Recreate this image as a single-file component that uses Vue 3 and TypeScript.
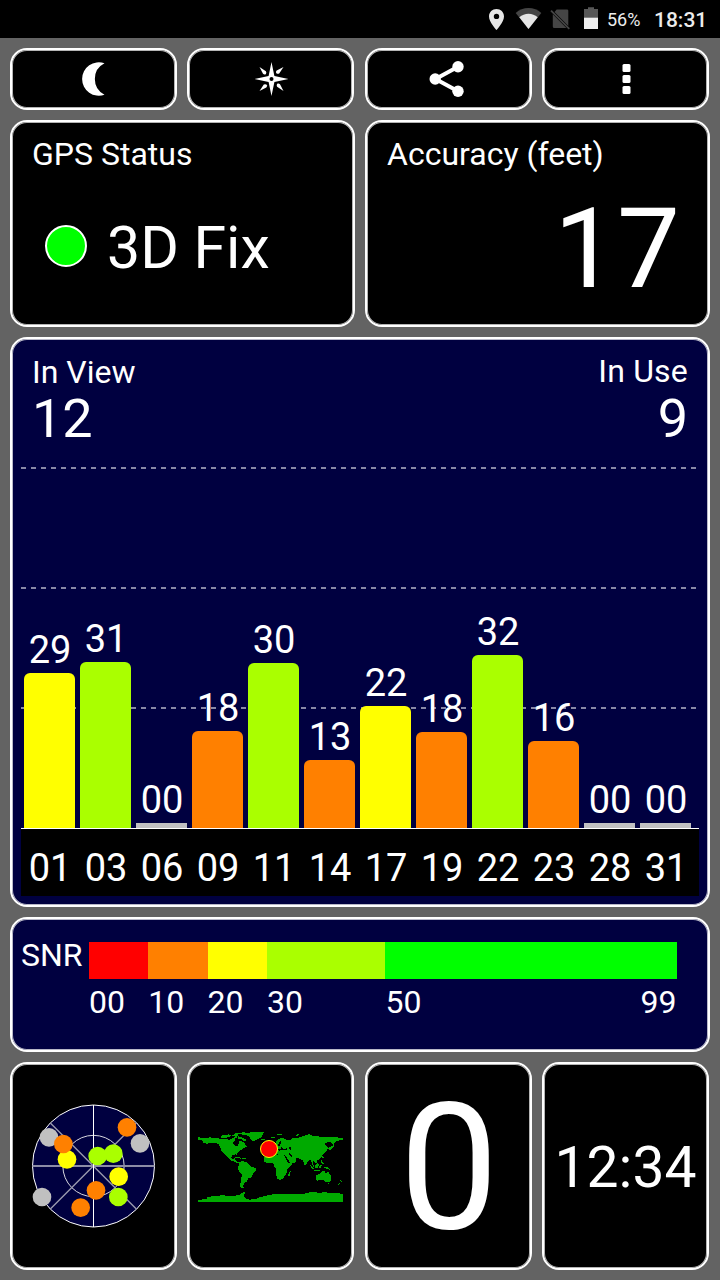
<script setup lang="ts">
interface Satellite {
  id: string
  snr: string
  height: number
  level: string
}

const satellites: Satellite[] = [
  { id: '01', snr: '29', height: 155, level: 'yellow' },
  { id: '03', snr: '31', height: 166, level: 'lime' },
  { id: '06', snr: '00', height: 5, level: 'none' },
  { id: '09', snr: '18', height: 97, level: 'orange' },
  { id: '11', snr: '30', height: 165, level: 'lime' },
  { id: '14', snr: '13', height: 68, level: 'orange' },
  { id: '17', snr: '22', height: 122, level: 'yellow' },
  { id: '19', snr: '18', height: 96, level: 'orange' },
  { id: '22', snr: '32', height: 173, level: 'lime' },
  { id: '23', snr: '16', height: 87, level: 'orange' },
  { id: '28', snr: '00', height: 5, level: 'none' },
  { id: '31', snr: '00', height: 5, level: 'none' },
]

interface SkyDot {
  x: number
  y: number
  fill: string
}

const skyDots: SkyDot[] = [
  { x: 117, y: 157, fill: '#c0c0c0' },
  { x: 390, y: 175, fill: '#c0c0c0' },
  { x: 96, y: 336, fill: '#c0c0c0' },
  { x: 171, y: 223, fill: '#ffff00' },
  { x: 160, y: 177, fill: '#ff8000' },
  { x: 263, y: 213, fill: '#aaff00' },
  { x: 310, y: 206, fill: '#aaff00' },
  { x: 351, y: 127, fill: '#ff8000' },
  { x: 326, y: 275, fill: '#ffff00' },
  { x: 325, y: 336, fill: '#aaff00' },
  { x: 258, y: 316, fill: '#ff8000' },
  { x: 212, y: 368, fill: '#ff8000' },
]

const snrScale = [
  { label: '00', level: 'red' },
  { label: '10', level: 'orange' },
  { label: '20', level: 'yellow' },
  { label: '30', level: 'lime' },
  { label: '50', level: 'green' },
]
</script>

<template>
  <div class="screen">
    <header class="status-bar">
      <svg class="status-icons" viewBox="0 0 130 38" width="130" height="38">
        <path fill="#e6e6e6" fill-rule="evenodd" d="M16.500 9c-4.200 0-7.500 3.200-7.500 7.400 0 5.400 7.500 13.600 7.500 13.600s7.500-8.200 7.500-13.600C24 12.200 20.700 9 16.500 9zm0 4.700a2.700 2.700 0 1 1 0 5.400 2.700 2.700 0 0 1 0-5.400z" />
        <path fill="#454545" d="M35.700 12.900C39.200 9.900 43.700 8 48.500 8s9.300 1.900 12.800 4.900L48.500 29z" />
        <path fill="#e6e6e6" d="M39.300 17.300c2.600-2.200 5.800-3.500 9.200-3.500s6.600 1.300 9.200 3.500L48.500 29z" />
        <path fill="#454545" d="M76.700 9.500h10.300q1.300 0 1.300 1.300v15.200L74.500 12.100zM72.800 14.200 86.400 28H74.300q-1.500 0-1.500-1.500z" />
        <path fill="none" stroke="#454545" stroke-width="1.700" d="M71 10.700 89.300 28.800" />
        <path fill="#575757" d="M108 7.300h6v1.700h4v9h-14V9h4z" />
        <path fill="#eeeeee" d="M104 17.700h14V29h-14z" />
      </svg>
      <span class="battery">56%</span>
      <span class="clock">18:31</span>
    </header>

    <main class="board">
      <section class="halves">
        <div class="pair">
          <button class="card tool" aria-label="Night mode">
            <svg viewBox="0 0 40 40" width="40" height="40">
              <path fill="#fff" d="M30.500 4.300A16.700 16.700 0 1 0 30.500 35.700A17.600 17.600 0 0 1 30.500 4.300z" />
            </svg>
          </button>
          <button class="card tool" aria-label="Compass">
            <svg viewBox="0 0 40 40" width="40" height="40">
              <g transform="translate(20.500 20)" fill="#fff">
                <path d="M0-17 2.900-2.900 17 0 2.900 2.900 0 17-2.900 2.900-17 0-2.900-2.900z" />
                <path v-for="turn in 4" :key="turn" :transform="`rotate(${turn * 90})`" d="M-12-12-5.600-7.700q.8 1.400 0 2.600l-.6.500q-1 .6-2.300-.6z" />
                <circle r="2" fill="#000" />
              </g>
            </svg>
          </button>
        </div>
        <div class="pair">
          <button class="card tool" aria-label="Share">
            <svg viewBox="2.500 0 40 40" width="40" height="40">
              <path fill="none" stroke="#fff" stroke-width="4" d="M32 7.500 9 20l23 12.500" />
              <circle cx="31.500" cy="7.800" r="5.700" fill="#fff" />
              <circle cx="8.700" cy="20" r="5.700" fill="#fff" />
              <circle cx="31.500" cy="32.200" r="5.700" fill="#fff" />
            </svg>
          </button>
          <button class="card tool" aria-label="More">
            <svg viewBox="0 0 40 40" width="40" height="40">
              <rect x="16.500" y="5" width="8" height="8" rx="1.500" fill="#fff" />
              <rect x="16.500" y="16" width="8" height="8" rx="1.500" fill="#fff" />
              <rect x="16.500" y="27" width="8" height="8" rx="1.500" fill="#fff" />
            </svg>
          </button>
        </div>
      </section>

      <section class="halves">
        <article class="card gps">
          <h2 class="label">GPS Status</h2>
          <div class="fix">
            <span class="lamp"></span>
            <span class="fix-text">3D Fix</span>
          </div>
        </article>
        <article class="card accuracy">
          <h2 class="label">Accuracy (feet)</h2>
          <div class="accuracy-value">17</div>
        </article>
      </section>

      <section class="card navy signal">
        <div class="counts">
          <div>
            <h2 class="label">In View</h2>
            <div class="count">12</div>
          </div>
          <div class="in-use">
            <h2 class="label">In Use</h2>
            <div class="count">9</div>
          </div>
        </div>
        <div class="plot">
          <div v-for="sat in satellites" :key="sat.id" class="column">
            <span class="value">{{ sat.snr }}</span>
            <div class="bar" :class="sat.level" :style="{ height: sat.height + 'px' }"></div>
          </div>
        </div>
        <div class="ids">
          <span v-for="sat in satellites" :key="sat.id" class="sat-id">{{ sat.id }}</span>
        </div>
      </section>

      <section class="card navy snr">
        <span class="snr-title">SNR</span>
        <div class="scale">
          <div v-for="step in snrScale" :key="step.label" class="step">
            <div class="swatch" :class="step.level"></div>
            <div class="ticks">
              <span>{{ step.label }}</span>
              <span v-if="step.level === 'green'">99</span>
            </div>
          </div>
        </div>
      </section>

      <section class="halves">
        <div class="pair">
          <article class="card tile">
            <svg viewBox="66 57 372 372" width="124" height="124">
              <circle cx="250.500" cy="243" r="183" fill="#000040" stroke="#fff" stroke-width="3" />
              <circle cx="250.500" cy="243" r="92" fill="none" stroke="#d8d8e0" stroke-width="3" />
              <path stroke="#9c9cb0" stroke-width="4" d="m121 114 258 258M379 114 121 372" />
              <path stroke="#8c8ca6" stroke-width="6" d="M67 243h367" />
              <path stroke="#fff" stroke-width="3" d="M250.500 60v366" />
              <circle v-for="(dot, i) in skyDots" :key="i" :cx="dot.x" :cy="dot.y" r="28" :fill="dot.fill" />
            </svg>
          </article>
          <article class="card tile map">
            <svg viewBox="39 51 435 210" width="145" height="70">
              <g fill="#00aa00" shape-rendering="crispEdges">
                <path d="M39 66l9 2 14 2 12-3 16 2 15 2 15 2 15 1 10-5 6-4 5 2-6 8-6 6 0 5 7 6 7 1 3-8 1-7 11 2 7 7 7 8-8 3-10 6-7 6-6 6 0 7-5-5-9 3-3 7 5 5 6-4 0 5 7 6 9 1-4 5-12-5-10-4-8-5-8-9-9-9-7-8-2-11-7-9-11-3-10 0-10 3-10-1-6-3 2-5-15-2z" />
                <path d="M106 66l6-6 11 1 8-3 8 3-6 6-11 1-8 3zM140 60l10-2 10 4-6 3-10-1zM160 64l10 3 12 5 3 7-9-2-9-5-9-2zM148 56l14-3 16-1 6 3-16 3-18 1z" />
                <path d="M170 57l16-4 22-1 30 0-6 8-4 8-12 5-9 7-7-4-6-9-8-6-15-1z" />
                <path d="M228 73h11v3h-8zM148 126l12-1 10 4-4 2-15-3zM172 130h10v3h-10z" />
                <path d="M163 143l9-5 11 3 8 5 7 8 16 7-2 8-8 8-3 9-12 5-3 8-8 5-4 8 0 5 5 1-5 2-8-3 0-9 3-14 1-17-8-9-4-12 4-5z" />
                <path d="M250 107l14-2 10-27 8-6 12-4 10 7 12 1 5-6 14-1 12-3 13-4 10-4 9 1 2 4 15 1 20 2 20-1 38 4v7l-10 0-15 5-3 10-6-8-9-2-12 3 2 7 8 8-5 9-11 10-2 8-8 8-8 1 1 10-4 1-6-10-3 4 5 17-4-3-6-18-5 0-8 8-2 7-4 0-6-16-12-5-10-1 4 6-6 9-11 2-7-10-9-12-13 0-5-4-14-4-6-2-11 1z" />
                <path d="M245 121l10-6 19-2 3 6 21 1 7 14 7 10 11-1-5 10-11 8 0 9-7 12-6 10-10 3-7-4-4-14 1-14-6-9-4-10-18 1-10-7 2-10z" />
                <path d="M312 172l5-4-1 10-4 6-3-4zM239 88h5l3 14-8 2zM258 68l6-3 9 0-5 3zM272 57l15-1 3 3-12 1zM330 63l8-5 5 1-9 5zM369 57l7 1-1 4-6-1zM430 100l5-4 8-4 2-6 2 8-8 9-7 3zM413 122l3 4-1 6-4-4z" />
                <path d="M375 148l6 5 5 8-2 2-11-13zM389 152l9-7 4 4-3 11-8 0zM402 152l8-1-2 9-5 0zM384 164l20 2 0 2-18-1zM408 133l5 8 4 6-5 0-4-7zM415 155l16 3 6 7-8-2-13-5z" />
                <path d="M393 182l11-6 7-8 8 1 2 6 5 0 3-8 5 10 5 8 0 9-7 8-9 0-8-8-8 0-9 3-5-3zM428 204h6l-2 4-4-1zM464 194l7 5-3 3zM459 207l6-5 1 2-6 6z" />
                <path d="M39 254l24-1 4-6 18-4 28-2 30 2 22-3 6-7 13-4-7 9 0 7 4 5 14 4 18-2 10-5 20-5 22-4 24 0 22-1 22 1 25-2 20-5 24 2 19-1 25 2 25 2 20 3-9 12 0 4 12 0v6H39z" />
              </g>
              <g fill="#000" shape-rendering="crispEdges">
                <path d="M278 101l9 0 2-4 7 5 9-2 1 5-11 1-8-2-3 3-6-1zM312 97l4-1 3 7-1 5-3-3zM150 70l4 0-2 6-4-1zM120 70l6 0 0 2-6 0zM296 119l3 0 14 24-3 2zM313 114l3 1 7 9-3 1-8-7zM285 78l3 0-2 12-5 5-3-3z" />
              </g>
              <circle cx="252" cy="102" r="25.500" fill="#f00" stroke="#ffff00" stroke-width="3" />
            </svg>
          </article>
        </div>
        <div class="pair">
          <article class="card tile speed">0</article>
          <article class="card tile time">12:34</article>
        </div>
      </section>
    </main>
  </div>
</template>

<style>
body {
  background: #636363;
}
</style>

<style scoped>
.screen {
  width: 720px;
  height: 1280px;
  overflow: hidden;
  background: #636363;
  color: #fff;
  font-family: Roboto, sans-serif;
}

.status-bar {
  display: flex;
  height: 38px;
  padding-left: 480px;
  background: #000;
  color: #ececec;
}

.status-icons {
  flex: none;
  width: 130px;
}

.battery {
  width: 47px;
  margin-left: -3px;
  font-size: 18px;
  line-height: 40px;
}

.clock {
  font-size: 21px;
  font-weight: 500;
  line-height: 40px;
}

.board {
  display: grid;
  grid-template-rows: 62px 207px 570px 135px 208px;
  gap: 10px;
  padding: 10px;
}

.halves {
  display: grid;
  grid-template-columns: 345px 345px;
  gap: 10px;
}

.pair {
  display: grid;
  grid-template-columns: 167px 167px;
  gap: 10px;
}

.card {
  box-sizing: border-box;
  overflow: hidden;
  border: 2px solid #fff;
  border-radius: 17px;
  background: #000;
  box-shadow: inset 0 0 0 1px #b4b4b4;
}

.navy {
  background: #000040;
  box-shadow: inset 0 0 0 1px #b8b8c8;
}

.tool {
  display: flex;
  align-items: center;
  justify-content: center;
  padding: 0;
}

.label {
  margin: 0;
  font-size: 32px;
  font-weight: 400;
  line-height: 38px;
}

.gps {
  padding: 13px 20px;
}

.fix {
  display: flex;
  align-items: flex-start;
  margin: 45px 0 0 13px;
}

.lamp {
  box-sizing: border-box;
  width: 42px;
  height: 42px;
  margin: 7px 20px 0 0;
  border: 2px solid #fff;
  border-radius: 50%;
  background: #0f0;
}

.fix-text {
  font-size: 59px;
  line-height: 60px;
}

.accuracy {
  padding: 13px 28px 0 20px;
}

.accuracy-value {
  margin-top: 20px;
  font-size: 112px;
  line-height: 112px;
  text-align: right;
}

.signal {
  padding: 1px 0 0 9px;
}

.counts {
  display: flex;
  box-sizing: border-box;
  justify-content: space-between;
  width: 667px;
  height: 127px;
  padding: 13px 0 0 11px;
}

.count {
  padding-top: 1px;
  font-size: 54px;
  line-height: 54px;
}

.in-use {
  margin-top: -1px;
  text-align: right;
}

.in-use .label {
  letter-spacing: 0.2px;
}

.in-use .count {
  padding-top: 2px;
}

.plot {
  --dash: repeating-linear-gradient(90deg, #8888a6 0 5px, transparent 5px 10px);
  display: flex;
  box-sizing: border-box;
  align-items: flex-end;
  gap: 5px;
  width: 678px;
  height: 362px;
  padding-left: 3px;
  border-bottom: 1px solid #fff;
  background: var(--dash) 0 0 / 676px 2px no-repeat, var(--dash) 0 120px / 676px 2px no-repeat,
    var(--dash) 0 240px / 676px 2px no-repeat;
}

.column {
  width: 51px;
  text-align: center;
}

.value {
  display: block;
  margin-bottom: 4px;
  padding-left: 1px;
  font-size: 38px;
  line-height: 38px;
}

.bar {
  border-radius: 6px 6px 0 0;
}

.bar.none {
  border-radius: 0;
}

.none {
  background: #c0c0c0;
}

.red {
  background: #f00;
}

.orange {
  background: #ff8000;
}

.yellow {
  background: #ff0;
}

.lime {
  background: #af0;
}

.green {
  background: #0f0;
}

.ids {
  display: flex;
  box-sizing: border-box;
  gap: 5px;
  width: 678px;
  height: 67px;
  padding: 20px 0 0 3px;
  background: #000;
}

.sat-id {
  box-sizing: border-box;
  width: 51px;
  padding-left: 1px;
  font-size: 38px;
  line-height: 38px;
  text-align: center;
}

.snr {
  display: grid;
  grid-template-columns: 68px 587.500px;
  padding: 17px 0 0 9px;
  font-size: 32px;
  line-height: 38px;
}

.scale {
  display: grid;
  grid-template-columns: 59.300px 59.300px 59.300px 118.600px 1fr;
  padding-top: 6px;
}

.swatch {
  height: 37px;
}

.ticks {
  display: flex;
  justify-content: space-between;
  padding-top: 4px;
}

.tile {
  display: flex;
  align-items: center;
  justify-content: center;
}

.map {
  padding-top: 2px;
}

.speed {
  padding: 3px 0 0 1px;
  font-size: 177px;
  line-height: 200px;
}

.time {
  padding-top: 3px;
  font-size: 57px;
  line-height: 60px;
}
</style>
